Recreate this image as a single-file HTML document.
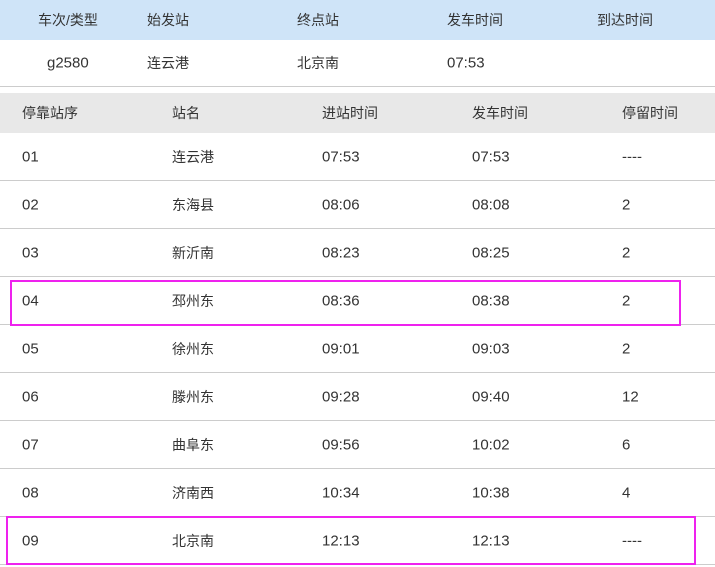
<!DOCTYPE html>
<html><head><meta charset="utf-8"><style>
body{margin:0;width:715px;height:567px;background:#fff;font-family:"Liberation Sans","Noto Sans CJK SC",sans-serif;font-size:14px;color:#333;position:relative;overflow:hidden}
.r{position:absolute;left:0;width:715px}
.r span{position:absolute;top:50%;transform:translateY(-50%);white-space:nowrap}
.row span:nth-child(1),.row span:nth-child(3),.row span:nth-child(4),.row span:nth-child(5),.t1 span:nth-child(1),.t1 span:nth-child(4){font-size:15px}
.h1{top:0;height:40px;background:#cfe4f8;color:#333}
.t1{top:40px;height:46px;border-bottom:1px solid #ccc}
.h2{top:93px;height:40px;background:#e8e8e8}
.row{height:47px;border-bottom:1px solid #ccc}
.box{position:absolute;border:2.5px solid #ee22ee;box-sizing:border-box}
</style></head><body>
<div class="r h1"><span style="left:38px">车次/类型</span><span style="left:147px">始发站</span><span style="left:297px">终点站</span><span style="left:447px">发车时间</span><span style="left:597px">到达时间</span></div>
<div class="r t1"><span style="left:47px">g2580</span><span style="left:147px">连云港</span><span style="left:297px">北京南</span><span style="left:447px">07:53</span></div>
<div class="r h2"><span style="left:22px">停靠站序</span><span style="left:172px">站名</span><span style="left:322px">进站时间</span><span style="left:472px">发车时间</span><span style="left:622px">停留时间</span></div>
<div class="r row" style="top:133px"><span style="left:22px">01</span><span style="left:172px">连云港</span><span style="left:322px">07:53</span><span style="left:472px">07:53</span><span style="left:622px">----</span></div>
<div class="r row" style="top:181px"><span style="left:22px">02</span><span style="left:172px">东海县</span><span style="left:322px">08:06</span><span style="left:472px">08:08</span><span style="left:622px">2</span></div>
<div class="r row" style="top:229px"><span style="left:22px">03</span><span style="left:172px">新沂南</span><span style="left:322px">08:23</span><span style="left:472px">08:25</span><span style="left:622px">2</span></div>
<div class="r row" style="top:277px"><span style="left:22px">04</span><span style="left:172px">邳州东</span><span style="left:322px">08:36</span><span style="left:472px">08:38</span><span style="left:622px">2</span></div>
<div class="r row" style="top:325px"><span style="left:22px">05</span><span style="left:172px">徐州东</span><span style="left:322px">09:01</span><span style="left:472px">09:03</span><span style="left:622px">2</span></div>
<div class="r row" style="top:373px"><span style="left:22px">06</span><span style="left:172px">滕州东</span><span style="left:322px">09:28</span><span style="left:472px">09:40</span><span style="left:622px">12</span></div>
<div class="r row" style="top:421px"><span style="left:22px">07</span><span style="left:172px">曲阜东</span><span style="left:322px">09:56</span><span style="left:472px">10:02</span><span style="left:622px">6</span></div>
<div class="r row" style="top:469px"><span style="left:22px">08</span><span style="left:172px">济南西</span><span style="left:322px">10:34</span><span style="left:472px">10:38</span><span style="left:622px">4</span></div>
<div class="r row" style="top:517px"><span style="left:22px">09</span><span style="left:172px">北京南</span><span style="left:322px">12:13</span><span style="left:472px">12:13</span><span style="left:622px">----</span></div>
<div class="box" style="left:10px;top:280px;width:671px;height:46px"></div>
<div class="box" style="left:6px;top:516px;width:690px;height:49px"></div>
</body></html>
